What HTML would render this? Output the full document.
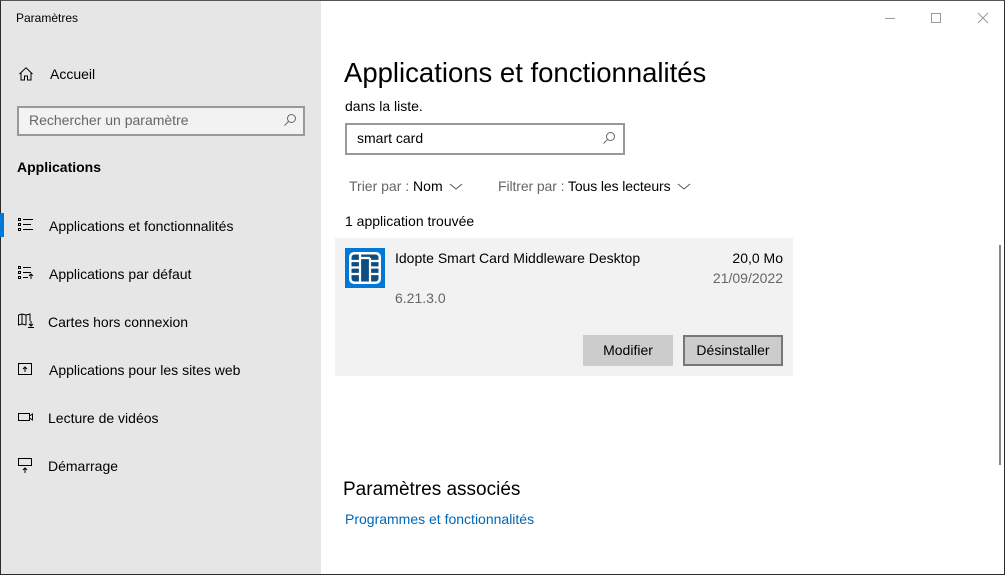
<!DOCTYPE html>
<html><head><meta charset="utf-8"><style>
*{margin:0;padding:0;box-sizing:border-box}
body{width:1005px;height:575px;overflow:hidden;font-family:"Liberation Sans",sans-serif;color:#000;background:#fff;position:relative}
.a{position:absolute;white-space:nowrap}
#left{position:absolute;left:0;top:0;width:321px;height:575px;background:#e6e6e6}
.nav{font-size:14px;color:#000}
svg{position:absolute}
</style></head><body>
<div id="left"></div>
<div class="a" style="left:0;top:0;width:1005px;height:575px;border:1px solid #2b2b2b;border-top:1px solid #555"></div>
<div class="a" style="left:16px;top:11px;font-size:12px">Paramètres</div>
<svg style="left:18px;top:66px" width="16" height="16" viewBox="0 0 16 16" fill="none" stroke="#000" stroke-width="1"><path d="M1.5 8L8 1.8L14.5 8M3 6.5V14H6.5V10H9.5V14H13V6.5"/></svg>
<div class="a nav" style="left:50px;top:66px">Accueil</div>
<div class="a" style="left:17px;top:106px;width:288px;height:30px;border:2px solid #999;background:#f2f2f2"></div>
<div class="a" style="left:29px;top:112px;font-size:14px;color:#666">Rechercher un paramètre</div>
<svg style="left:283px;top:113px" width="14" height="14" viewBox="0 0 14 14" fill="none" stroke="#666" stroke-width="1"><circle cx="8.5" cy="5.5" r="4"/><path d="M5.5 8.5L1.5 12.5"/></svg>
<div class="a" style="left:17px;top:159px;font-size:14px;font-weight:bold">Applications</div>
<div class="a" style="left:0;top:213px;width:4px;height:24px;background:#0078d7"></div>
<svg style="left:17px;top:217px" width="18" height="16" viewBox="0 0 18 16" fill="none" stroke="#000" stroke-width="1"><rect x="1.5" y="1.5" width="2" height="2"/><rect x="1.5" y="6.5" width="2" height="2"/><rect x="1.5" y="11.5" width="2" height="2"/><path d="M6 2.5H16M6 7.5H14M6 12.5H16"/></svg>
<div class="a nav" style="left:49px;top:218px">Applications et fonctionnalités</div>
<svg style="left:17px;top:265px" width="18" height="16" viewBox="0 0 18 16" fill="none" stroke="#000" stroke-width="1"><rect x="1.5" y="1.5" width="2" height="2"/><rect x="1.5" y="6.5" width="2" height="2"/><rect x="1.5" y="11.5" width="2" height="2"/><path d="M6 2.5H14M6 7.5H14M6 12.5H11M14 14V9M12 11L14 9L16 11"/></svg>
<div class="a nav" style="left:49px;top:266px">Applications par défaut</div>
<svg style="left:17px;top:313px" width="18" height="16" viewBox="0 0 18 16" fill="none" stroke="#000" stroke-width="1"><path d="M1.5 2L5 1L9 2L13 1V8M1.5 2V12L5 11L9 12M5 1V11M9 2V12M14 8V13M12 11L14 13L16 11M11 14.5H17"/></svg>
<div class="a nav" style="left:48px;top:314px">Cartes hors connexion</div>
<svg style="left:17px;top:361px" width="18" height="16" viewBox="0 0 18 16" fill="none" stroke="#000" stroke-width="1"><rect x="1.5" y="2.5" width="13" height="11"/><path d="M8 11V6M6 8L8 6L10 8"/></svg>
<div class="a nav" style="left:49px;top:362px">Applications pour les sites web</div>
<svg style="left:17px;top:409px" width="18" height="16" viewBox="0 0 18 16" fill="none" stroke="#000" stroke-width="1"><rect x="1.5" y="4.5" width="11" height="7"/><path d="M12.5 7L15.5 5V11L12.5 9"/></svg>
<div class="a nav" style="left:48px;top:410px">Lecture de vidéos</div>
<svg style="left:17px;top:457px" width="18" height="18" viewBox="0 0 18 18" fill="none" stroke="#000" stroke-width="1"><rect x="1.5" y="1.5" width="13" height="7"/><path d="M8 16V11M6 13L8 11L10 13"/></svg>
<div class="a nav" style="left:48px;top:458px">Démarrage</div>

<svg style="left:882px;top:12px" width="110" height="12" viewBox="0 0 110 12" fill="none" stroke="#999" stroke-width="1"><path d="M3 6.5H13"/><rect x="49.5" y="1.5" width="9" height="9"/><path d="M96 1L106 11M106 1L96 11"/></svg>

<div class="a" style="left:344px;top:57px;font-size:27.5px">Applications et fonctionnalités</div>
<div class="a" style="left:345px;top:98px;font-size:14px">dans la liste.</div>
<div class="a" style="left:345px;top:123px;width:280px;height:32px;border:2px solid #999;background:#fff"></div>
<div class="a" style="left:357px;top:130px;font-size:14px">smart card</div>
<svg style="left:602px;top:131px" width="14" height="14" viewBox="0 0 14 14" fill="none" stroke="#666" stroke-width="1"><circle cx="8.5" cy="5.5" r="4"/><path d="M5.5 8.5L1.5 12.5"/></svg>
<div class="a" style="left:349px;top:178px;font-size:14px;color:#666">Trier par : <span style="color:#000">Nom</span></div>
<svg style="left:449px;top:182px" width="14" height="9" viewBox="0 0 14 9" fill="none" stroke="#555" stroke-width="1"><path d="M1 2L7 7L13 2"/></svg>
<div class="a" style="left:498px;top:178px;font-size:14px;color:#666;letter-spacing:-0.1px">Filtrer par : <span style="color:#000">Tous les lecteurs</span></div>
<svg style="left:677px;top:182px" width="14" height="9" viewBox="0 0 14 9" fill="none" stroke="#555" stroke-width="1"><path d="M1 2L7 7L13 2"/></svg>
<div class="a" style="left:345px;top:213px;font-size:14px">1 application trouvée</div>

<div class="a" style="left:335px;top:238px;width:458px;height:138px;background:#f2f2f2"></div>
<svg style="left:345px;top:248px" width="40" height="40" viewBox="0 0 40 40"><rect width="40" height="40" fill="#0078d7"/><rect x="4" y="4" width="32" height="32" rx="5" fill="#fff"/><rect x="6.5" y="6.5" width="27" height="27" rx="3" fill="#0e4d80"/><path d="M6 13H15M6 19.5H15M6 26H15M25 13H34M25 19.5H34M25 26H34M15 6V34M25 10V34M15 10H25" stroke="#fff" stroke-width="2.2" fill="none"/></svg>
<div class="a" style="left:395px;top:250px;font-size:14px">Idopte Smart Card Middleware Desktop</div>
<div class="a" style="left:395px;top:290px;font-size:14px;color:#666">6.21.3.0</div>
<div class="a" style="right:222px;top:250px;font-size:14px">20,0 Mo</div>
<div class="a" style="right:222px;top:270px;font-size:14px;color:#666">21/09/2022</div>
<div class="a" style="left:583px;top:335px;width:90px;height:31px;background:#ccc;font-size:14px;text-align:center;line-height:31px">Modifier</div>
<div class="a" style="left:683px;top:335px;width:100px;height:31px;background:#ccc;border:2px solid #777;font-size:14px;text-align:center;line-height:27px">Désinstaller</div>

<div class="a" style="left:999px;top:245px;width:2px;height:220px;background:#888"></div>

<div class="a" style="left:343px;top:479px;font-size:19px">Paramètres associés</div>
<div class="a" style="left:345px;top:511px;font-size:14px;color:#0066b4">Programmes et fonctionnalités</div>
</body></html>
